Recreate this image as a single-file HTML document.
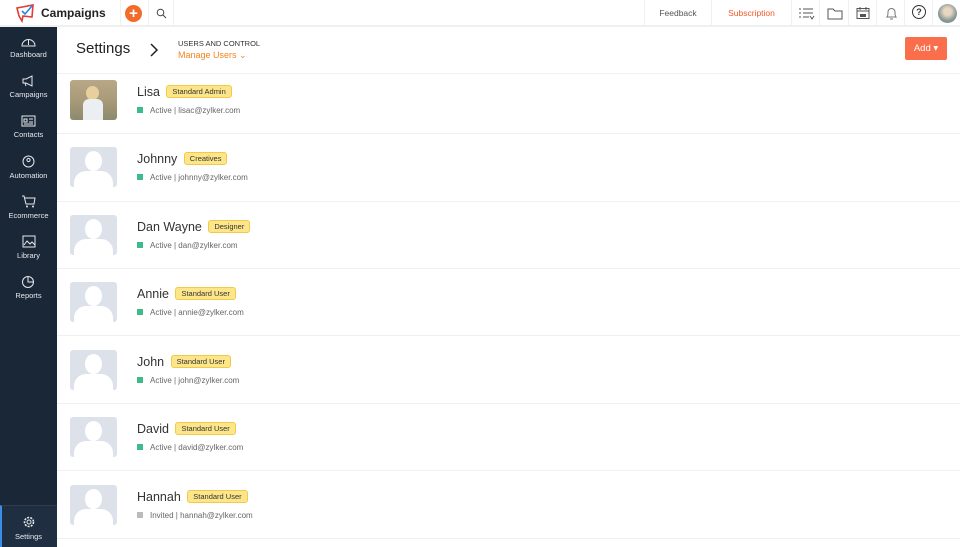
<!DOCTYPE html><html><head><style>
*{margin:0;padding:0;box-sizing:border-box}
body{width:960px;height:547px;overflow:hidden;font-family:"Liberation Sans",sans-serif;background:#fff;position:relative;color:#333}
.top{position:absolute;left:0;top:0;width:960px;height:27px;border-bottom:2px solid #eef0f2;background:#fff}
.side{position:absolute;left:0;top:27px;width:57px;height:520px;background:#1a2737}
.si{position:absolute;left:0;width:57px;text-align:center;color:#e6e9ee;font-size:7.5px}
.si svg{display:block;margin:0 auto 3px}
.row{position:absolute;left:57px;width:903px;height:67px}
.sep{position:absolute;left:57px;width:903px;height:1px;background:#eef0f2}
.av{position:absolute;left:13px;top:7px;width:47px;height:40px;background:#dde1ea;border-radius:3px;overflow:hidden}
.nm{position:absolute;left:80px;top:12px;font-size:12.5px;color:#333;white-space:nowrap}
.bd{display:inline-block;font-size:7.5px;background:#fde68a;border:1px solid #f3c94a;border-radius:3px;padding:1px 5px;margin-left:3px;vertical-align:2px;color:#333}
.st{position:absolute;left:80px;top:33px;font-size:8px;color:#666}
.dot{display:inline-block;width:6px;height:6px;background:#3dbb8a;margin-right:7px;vertical-align:0}
.tb{position:absolute;top:0;height:27px;border-left:1px solid #eef0f2}
</style></head><body>
<div class="top">
<svg style="position:absolute;left:15px;top:3px" width="22" height="20" viewBox="0 0 22 20"><path d="M2 5 L18 2 L17 14 L8 13 L7 18 L4 13 Z" fill="none" stroke="#e53935" stroke-width="1.6"/><path d="M7 8 L10 11 L17 3" fill="none" stroke="#1e88e5" stroke-width="1.6"/></svg>
<div style="position:absolute;left:41px;top:6px;font-size:12px;font-weight:bold;color:#222">Campaigns</div>
<div class="tb" style="left:120px;width:28px"><div style="position:absolute;left:4px;top:5px;width:17px;height:17px;border-radius:50%;background:#f36b2b;color:#fff;font-weight:bold;font-size:15px;line-height:17px;text-align:center">+</div></div>
<div class="tb" style="left:148px;width:26px;border-right:1px solid #eef0f2"><svg style="position:absolute;left:7px;top:8px" width="11" height="11"><circle cx="4.5" cy="4.5" r="3.3" fill="none" stroke="#444" stroke-width="1"/><path d="M7 7L10 10" stroke="#444"/></svg></div>
<div class="tb" style="left:644px;width:67px;font-size:8.5px;color:#555;text-align:center;line-height:27px">Feedback</div>
<div class="tb" style="left:711px;width:80px;font-size:8.5px;color:#f05a28;text-align:center;line-height:27px">Subscription</div>
<div class="tb" style="left:791px;width:28px"><svg style="position:absolute;left:6px;top:7px" width="17" height="13"><path d="M1 2h2M5 2h10M1 6h2M5 6h10M1 10h2M5 10h6" stroke="#555"/><path d="M12 9l2 3 2-3" fill="none" stroke="#555"/></svg></div>
<div class="tb" style="left:819px;width:29px"><svg style="position:absolute;left:7px;top:7px" width="16" height="13"><path d="M1 2h5l2 2h7v8H1z" fill="none" stroke="#555"/></svg></div>
<div class="tb" style="left:848px;width:28px"><svg style="position:absolute;left:7px;top:6px" width="14" height="14"><rect x="1" y="2.5" width="12" height="10" fill="none" stroke="#555"/><path d="M1 5h12" stroke="#555"/><path d="M4 1v3M10 1v3" stroke="#555"/><rect x="4" y="8" width="6" height="3" fill="#555"/></svg></div>
<div class="tb" style="left:876px;width:28px"><svg style="position:absolute;left:8px;top:6px" width="13" height="15"><path d="M2 11c1-1 1-3 1-5a3.5 3.5 0 017 0c0 2 0 4 1 5z" fill="none" stroke="#777"/><path d="M5 13h3" stroke="#777"/></svg></div>
<div class="tb" style="left:904px;width:28px"><div style="position:absolute;left:7px;top:5px;width:14px;height:14px;border:1.2px solid #333;border-radius:50%;font-size:9px;font-weight:bold;text-align:center;line-height:12px">?</div></div>
<div class="tb" style="left:932px;width:28px"><div style="position:absolute;left:5px;top:4px;width:19px;height:19px;border-radius:50%;background:radial-gradient(circle at 50% 40%,#e8d6c0 25%,#8a9a9a 60%,#6e7c70)"></div></div>
</div>
<div class="side">
<div class="si" style="top:8px"><svg width="15" height="12"><path d="M1 11a6.5 6.5 0 0113 0z" fill="none" stroke="#e6e9ee"/><path d="M7.5 10V5" stroke="#e6e9ee"/></svg>Dashboard</div>
<div class="si" style="top:48px"><svg width="15" height="12"><path d="M2 4h3l6-3v10l-6-3H2z" fill="none" stroke="#e6e9ee"/><path d="M4 8l1 3" stroke="#e6e9ee"/></svg>Campaigns</div>
<div class="si" style="top:88px"><svg width="15" height="12"><rect x="1" y="1" width="13" height="10" fill="none" stroke="#e6e9ee"/><path d="M3 4h3v3H3zM8 4h4M8 7h4M3 9h9" stroke="#e6e9ee" fill="none"/></svg>Contacts</div>
<div class="si" style="top:128px"><svg width="15" height="13"><circle cx="7.5" cy="6.5" r="5.5" fill="none" stroke="#e6e9ee"/><circle cx="7.5" cy="5" r="1.6" fill="none" stroke="#e6e9ee"/></svg>Automation</div>
<div class="si" style="top:168px"><svg width="15" height="13"><path d="M1 1h2l2 8h8l1-6H4" fill="none" stroke="#e6e9ee"/><circle cx="6" cy="11.5" r="1" fill="#e6e9ee"/><circle cx="12" cy="11.5" r="1" fill="#e6e9ee"/></svg>Ecommerce</div>
<div class="si" style="top:208px"><svg width="15" height="13"><rect x="2" y="1" width="12" height="11" fill="none" stroke="#e6e9ee"/><path d="M3 10l3-4 3 3 2-2 3 3" fill="none" stroke="#e6e9ee"/></svg>Library</div>
<div class="si" style="top:248px"><svg width="15" height="13"><circle cx="7" cy="7" r="5.5" fill="none" stroke="#e6e9ee"/><path d="M7 1.5V7h5.5" fill="none" stroke="#e6e9ee"/></svg>Reports</div>
<div style="position:absolute;left:0;top:478px;width:57px;height:42px;background:#1f2e40;border-left:2px solid #3a8ee6;border-top:1px solid #2d3c4e"></div>
<div class="si" style="top:488px"><svg width="14" height="14"><circle cx="7" cy="7" r="4.5" fill="none" stroke="#e6e9ee" stroke-dasharray="2 1.2" stroke-width="1.6"/><circle cx="7" cy="7" r="2" fill="none" stroke="#e6e9ee"/></svg>Settings</div>
</div>
<div style="position:absolute;left:57px;top:27px;width:903px;height:47px;border-bottom:1px solid #eef0f2">
<div style="position:absolute;left:19px;top:13px;font-size:15px;color:#222">Settings</div>
<svg style="position:absolute;left:92px;top:16px" width="10" height="14"><path d="M2 1l6 6-6 6" fill="none" stroke="#222" stroke-width="1.5"/></svg>
<div style="position:absolute;left:121px;top:12px;font-size:7.5px;color:#333">USERS AND CONTROL</div>
<div style="position:absolute;left:121px;top:23px;font-size:9px;color:#f3841d">Manage Users &#8964;</div>
<div style="position:absolute;left:848px;top:10px;width:42px;height:23px;background:#fb6e4b;border-radius:2px;color:#fff;font-size:9.5px;line-height:23px;text-align:center">Add &#9662;</div>
</div>
<div class="sep" style="top:133px"></div><div class="sep" style="top:201px"></div><div class="sep" style="top:268px"></div><div class="sep" style="top:335px"></div><div class="sep" style="top:403px"></div><div class="sep" style="top:470px"></div><div class="sep" style="top:538px"></div>
<div class="row" style="top:73px"><div class="av" style="background:linear-gradient(#b8a888,#a99a78 50%,#8d8a6e)"><div style="position:absolute;left:16px;top:6px;width:13px;height:14px;border-radius:50%;background:#e8cf9e"></div><div style="position:absolute;left:13px;top:19px;width:20px;height:21px;background:#eceff2;border-radius:6px 6px 0 0"></div></div><div class="nm">Lisa <span class="bd">Standard Admin</span></div><div class="st"><span class="dot"></span>Active | lisac@zylker.com</div></div>
<div class="row" style="top:140px"><div class="av"><div style="position:absolute;left:15px;top:4px;width:17px;height:20px;border-radius:50%;background:#fff"></div><div style="position:absolute;left:4px;top:24px;width:39px;height:20px;border-radius:12px 12px 0 0;background:#fff"></div></div><div class="nm">Johnny <span class="bd">Creatives</span></div><div class="st"><span class="dot"></span>Active | johnny@zylker.com</div></div>
<div class="row" style="top:208px"><div class="av"><div style="position:absolute;left:15px;top:4px;width:17px;height:20px;border-radius:50%;background:#fff"></div><div style="position:absolute;left:4px;top:24px;width:39px;height:20px;border-radius:12px 12px 0 0;background:#fff"></div></div><div class="nm">Dan Wayne <span class="bd">Designer</span></div><div class="st"><span class="dot"></span>Active | dan@zylker.com</div></div>
<div class="row" style="top:275px"><div class="av"><div style="position:absolute;left:15px;top:4px;width:17px;height:20px;border-radius:50%;background:#fff"></div><div style="position:absolute;left:4px;top:24px;width:39px;height:20px;border-radius:12px 12px 0 0;background:#fff"></div></div><div class="nm">Annie <span class="bd">Standard User</span></div><div class="st"><span class="dot"></span>Active | annie@zylker.com</div></div>
<div class="row" style="top:343px"><div class="av"><div style="position:absolute;left:15px;top:4px;width:17px;height:20px;border-radius:50%;background:#fff"></div><div style="position:absolute;left:4px;top:24px;width:39px;height:20px;border-radius:12px 12px 0 0;background:#fff"></div></div><div class="nm">John <span class="bd">Standard User</span></div><div class="st"><span class="dot"></span>Active | john@zylker.com</div></div>
<div class="row" style="top:410px"><div class="av"><div style="position:absolute;left:15px;top:4px;width:17px;height:20px;border-radius:50%;background:#fff"></div><div style="position:absolute;left:4px;top:24px;width:39px;height:20px;border-radius:12px 12px 0 0;background:#fff"></div></div><div class="nm">David <span class="bd">Standard User</span></div><div class="st"><span class="dot"></span>Active | david@zylker.com</div></div>
<div class="row" style="top:478px"><div class="av"><div style="position:absolute;left:15px;top:4px;width:17px;height:20px;border-radius:50%;background:#fff"></div><div style="position:absolute;left:4px;top:24px;width:39px;height:20px;border-radius:12px 12px 0 0;background:#fff"></div></div><div class="nm">Hannah <span class="bd">Standard User</span></div><div class="st"><span class="dot" style="background:#bbb"></span>Invited | hannah@zylker.com</div></div>
</body></html>
